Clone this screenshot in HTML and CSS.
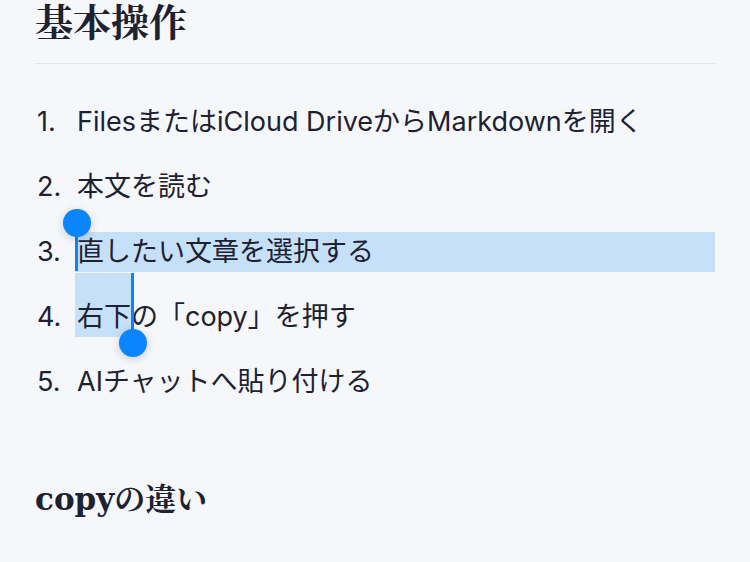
FILE: index.html
```html
<!DOCTYPE html>
<html lang="ja">
<head>
<meta charset="utf-8">
<link rel="stylesheet" href="styles.css">
</head>
<body>
<main class="doc">
  <h1 class="h1">基本操作</h1>
  <ol class="steps">
    <li class="step"><span class="num">1.</span><span class="txt">FilesまたはiCloud DriveからMarkdownを開く</span></li>
    <li class="step"><span class="num">2.</span><span class="txt">本文を読む</span></li>
    <li class="step"><span class="num">3.</span><span class="txt sel-line"><span class="handle handle-start"></span>直したい文章を選択する</span></li>
    <li class="step"><span class="num">4.</span><span class="txt"><span class="sel-end">右下<span class="handle handle-end"></span></span>の「copy」を押す</span></li>
    <li class="step"><span class="num">5.</span><span class="txt">AIチャットへ貼り付ける</span></li>
  </ol>
  <h2 class="h2">copyの違い</h2>
</main>
</body>
</html>
```
FILE: styles.css
```css
html, body {
  margin: 0;
  padding: 0;
  background: #f5f7fb;
}
.doc {
  padding: 0 35px;
  color: #1d2130;
  font-family: Inter, "Noto Sans CJK JP", sans-serif;
}
.h1 {
  margin: 0;
  font-family: "Liberation Serif", "Noto Serif CJK JP", "Noto Sans CJK JP", serif;
  font-weight: 700;
  font-size: 38px;
  line-height: 46px;
  padding-bottom: 17px;
  border-bottom: 1.5px solid #e1e3e9;
}
.steps {
  list-style: none;
  margin: 25px 0 0;
  padding: 0;
}
.step {
  display: flex;
  align-items: center;
  height: 65px;
  font-size: 27px;
}
.num {
  width: 42px;
  flex: none;
  padding-left: 2px;
  box-sizing: border-box;
  line-height: 40px;
}
.txt {
  line-height: 40px;
  white-space: nowrap;
}
.sel-line {
  flex: 1;
  position: relative;
  background: #c6e0fa;
  margin-left: -2px;
  padding-left: 2px;
}
.sel-end {
  display: inline-block;
  position: relative;
  background: #c6e0fa;
  box-shadow: 0 -24px 0 #c6e0fa;
  margin-left: -2px;
  padding-left: 2px;
}
.handle {
  position: absolute;
  width: 3px;
  background: #0a84ff;
}
.handle::after {
  content: "";
  position: absolute;
  left: -12.5px;
  width: 28px;
  height: 28px;
  border-radius: 50%;
  background: #0a84ff;
  box-shadow: 0 2px 10px rgba(0, 0, 0, 0.18);
}
.handle-start {
  left: 0;
  top: -9px;
  height: 48px;
}
.handle-start::after {
  top: -14px;
}
.handle-end {
  right: -3px;
  top: -24px;
  height: 64px;
}
.handle-end::after {
  bottom: -20px;
}
.h2 {
  margin: 65px 0 0;
  font-family: "DejaVu Serif", "Noto Serif CJK JP", "Noto Sans CJK JP", serif;
  font-weight: 700;
  font-size: 31px;
  line-height: 40px;
}
```
